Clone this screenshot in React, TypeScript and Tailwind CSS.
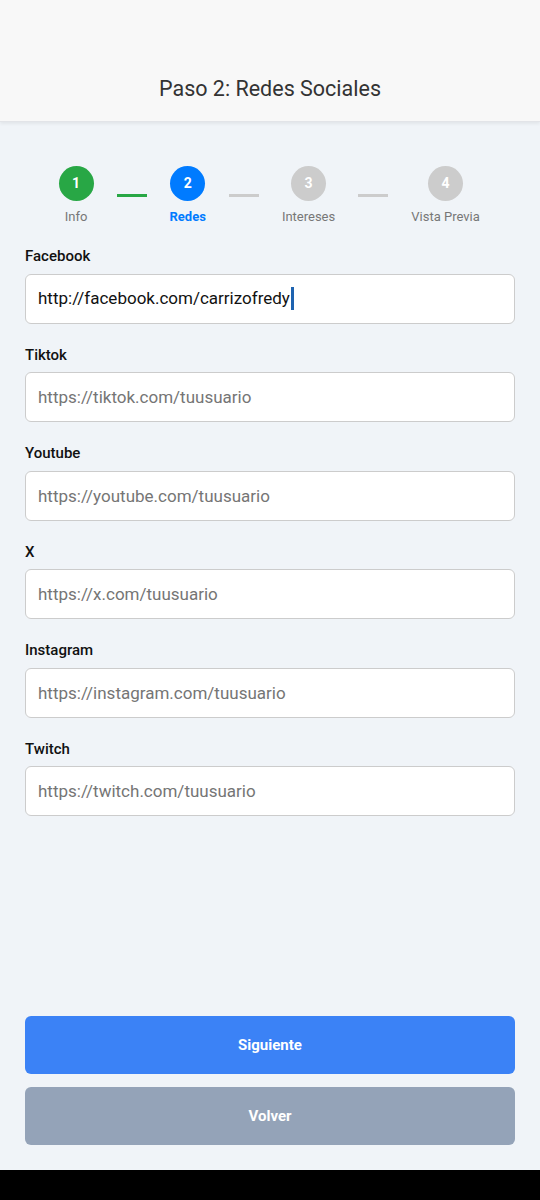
import React from "react";

const font = { fontFamily: "Roboto, 'Noto Sans', sans-serif" };

function Step({ n, label, state }: { n: number; label: string; state: "done" | "active" | "todo" }) {
  const circle =
    state === "done" ? "bg-[#28a745]" : state === "active" ? "bg-[#007bff]" : "bg-[#cccccc]";
  const text =
    state === "active" ? "text-[#007bff] font-bold" : "text-[#777777]";
  return (
    <div className="flex flex-col items-center">
      <div className={`w-[35px] h-[35px] rounded-full flex items-center justify-center text-white text-[14px] font-bold ${circle}`}>
        {n}
      </div>
      <div className={`mt-[8px] text-[13px] leading-[16px] whitespace-nowrap ${text}`}>{label}</div>
    </div>
  );
}

function Line({ done }: { done: boolean }) {
  return <div className={`w-[30px] h-[3px] mx-[23px] ${done ? "bg-[#28a745]" : "bg-[#cccccc]"}`} />;
}

const fields = [
  { label: "Tiktok", ph: "https://tiktok.com/tuusuario" },
  { label: "Youtube", ph: "https://youtube.com/tuusuario" },
  { label: "X", ph: "https://x.com/tuusuario" },
  { label: "Instagram", ph: "https://instagram.com/tuusuario" },
  { label: "Twitch", ph: "https://twitch.com/tuusuario" },
];

export default function App() {
  return (
    <div className="w-[540px] h-[1200px] flex flex-col bg-[#f0f4f8]" style={font}>
      <div className="h-[122px] bg-[#f8f8f8] border-b border-[#e2e4e8] shadow-[0_2px_3px_rgba(0,0,0,0.06)] flex items-end justify-center pb-[18px]">
        <h1 className="text-[21.5px] leading-[28px] text-[#333333] font-normal">Paso 2: Redes Sociales</h1>
      </div>

      <div className="flex-1 flex flex-col px-[25px]">
        <div className="flex items-center pl-[33.5px] mt-[44px]">
          <Step n={1} label="Info" state="done" />
          <Line done />
          <Step n={2} label="Redes" state="active" />
          <Line done={false} />
          <Step n={3} label="Intereses" state="todo" />
          <Line done={false} />
          <Step n={4} label="Vista Previa" state="todo" />
        </div>

        <div className="mt-[22px] flex flex-col">
          <label className="text-[15px] leading-[18px] font-medium text-[#111111]">Facebook</label>
          <div className="mt-[8.5px] h-[50px] bg-white border border-[#cccccc] rounded-[6px] flex items-center px-[12px]">
            <span className="text-[17px] text-[#111111]">http://facebook.com/carrizofredy</span>
            <span className="w-[3px] h-[23px] bg-[#1e63b0] ml-[1px]" />
          </div>
          {fields.map((f) => (
            <div key={f.label} className="mt-[22px] flex flex-col">
              <label className="text-[15px] leading-[18px] font-medium text-[#111111]">{f.label}</label>
              <input
                readOnly
                placeholder={f.ph}
                className="mt-[8.5px] h-[50px] bg-white border border-[#cccccc] rounded-[6px] px-[12px] text-[17px] outline-none placeholder:text-[#757575]"
                style={font}
              />
            </div>
          ))}
        </div>

        <div className="mt-auto flex flex-col gap-[13px] pb-[25px]">
          <button className="h-[58px] rounded-[6px] bg-[#3b82f6] text-white text-[15px] font-bold" style={font}>
            Siguiente
          </button>
          <button className="h-[58px] rounded-[6px] bg-[#94a3b8] text-white text-[15px] font-bold" style={font}>
            Volver
          </button>
        </div>
      </div>
      <div className="h-[30px] bg-black" />
    </div>
  );
}
